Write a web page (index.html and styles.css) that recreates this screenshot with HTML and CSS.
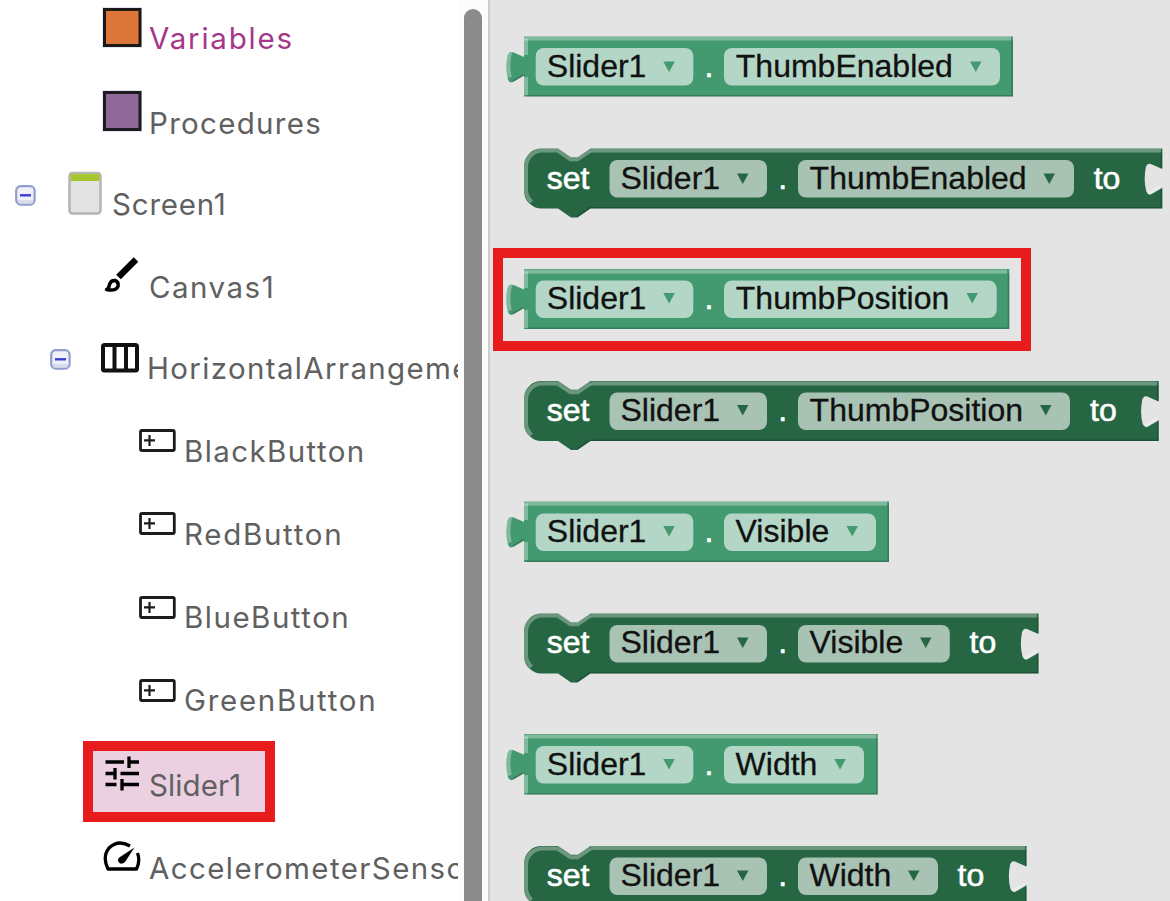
FILE: index.html
```html
<!DOCTYPE html>
<html lang="en">
<head>
<meta charset="utf-8">
<title>Blocks</title>
<link rel="stylesheet" href="styles.css">
</head>
<body>
<svg class="defs" width="0" height="0" aria-hidden="true">
  <defs>
    <symbol id="minus" viewBox="0 0 22 22">
      <rect x="1.2" y="1.2" width="18.4" height="18.4" rx="4.5" fill="#f0f1f8" stroke="#8f9dd0" stroke-width="2.2"/>
      <path d="M3 15h15v2q0 1.5-1.5 1.5h-12Q3 18.500 3 17z" fill="#d9dcea"/>
      <path d="M5 10.300h11" stroke="#3c3cd8" stroke-width="2.400"/>
    </symbol>
    <symbol id="button" viewBox="0 0 38 26">
      <rect x="1.500" y="1.500" width="33.800" height="20" rx="1.500" fill="#fff" stroke="#1c1c1c" stroke-width="2.800"/>
      <path d="M5 11.300h11M10.500 6v11" stroke="#1c1c1c" stroke-width="2.200"/>
    </symbol>
    <path id="arrow" d="M0 0h11.500L5.750 10.500z"/>
    <path id="setEdge" d="M531.500 54A18 18 0 0 1 526 43V19A16.500 16.500 0 0 1 542 2.500H557.500L570.500 11.200H577.500L590.500 2.500"/>
    <path id="getEdge" d="M526 59V41M526 19V2.500M512.500 16.500Q509.800 15.500 509.300 20Q507.300 31 509.800 41.500"/>
  </defs>
</svg>
<main class="app">
  <nav class="tree">
    <div class="row tall l1"><svg class="icon" viewBox="0 0 42 44"><rect x="1" y="2" width="40" height="41" fill="#e1e6f4"/><rect x="3.500" y="4.500" width="35.500" height="36" fill="#dc763b" stroke="#1d1916" stroke-width="3"/></svg><span class="label variables">Variables</span></div>
    <div class="row short l1"><svg class="icon" viewBox="0 0 42 44"><rect x="1" y="0" width="40" height="42" fill="#e1e6f4"/><rect x="3.500" y="2.500" width="35.500" height="37" fill="#8f6997" stroke="#1d1a20" stroke-width="3"/></svg><span class="label procedures">Procedures</span></div>
    <div class="row l0"><svg class="toggle"><use href="#minus"/></svg><svg class="icon" viewBox="0 0 42 44"><rect x="4.500" y="2" width="31" height="40.500" rx="3" fill="#e3e3e3" stroke="#b5b5b5" stroke-width="2.500"/><path d="M5.500 3h29v7H5.500z" fill="#a7c72f"/></svg><span class="label screen">Screen1</span></div>
    <div class="row short l1"><svg class="icon" viewBox="0 0 42 44"><path d="M17.500 23 35 5.500" stroke="#000" stroke-width="6.500"/><path d="M5.500 35.500Q8 34.500 8.500 30.500Q10 26 14 26.500Q18 28 17 32.500Q14.500 37.500 5.500 35.500z" fill="#fff" stroke="#000" stroke-width="3.500" stroke-linejoin="round"/></svg><span class="label canvas">Canvas1</span></div>
    <div class="row nested"><svg class="toggle"><use href="#minus"/></svg><svg class="icon" viewBox="0 0 42 44"><rect x="3" y="10" width="34" height="25.500" rx="1.500" fill="#fff" stroke="#111" stroke-width="4"/><path d="M14.500 10v26M26 10v26" stroke="#111" stroke-width="4"/></svg><span class="label horizontal">HorizontalArrangement1</span></div>
    <div class="row l2"><svg class="btn"><use href="#button"/></svg><span class="label black">BlackButton</span></div>
    <div class="row l2"><svg class="btn"><use href="#button"/></svg><span class="label red">RedButton</span></div>
    <div class="row l2"><svg class="btn low"><use href="#button"/></svg><span class="label blue">BlueButton</span></div>
    <div class="row tall l2"><svg class="btn low"><use href="#button"/></svg><span class="label green">GreenButton</span></div>
    <div class="row l1 selected"><svg class="icon" viewBox="0 0 42 44"><path d="M4.500 10h18.500M28 10h10M28 4.500v11.500M4.500 21.500h11M14 16v11.500M19.500 21.500H38M4.500 32.500h11M21 27v11.500M21 32.500h17" stroke="#000" stroke-width="3.300" fill="none"/></svg><span class="label slider">Slider1</span></div>
    <div class="row l1"><svg class="icon" viewBox="0 0 42 44"><path d="M29 11Q17 4 8 13Q1 22 7 34H35.500Q39.500 26 36.500 18" stroke="#000" stroke-width="3.300" fill="none" stroke-linejoin="round"/><path d="M33.500 12.500 24 27Q20 30.500 17.500 27Q16 24 19 22z"/></svg><span class="label accel">AccelerometerSensor1</span></div>
  </nav>
  <div class="scroll"><div class="thumb"></div></div>
  <section class="flyout">
    <svg class="block get" width="670" height="112" viewBox="500 0 670 112">
      <path class="body" d="M524 .500H1013V60.500H524V39.500l-11 6.500q-3.500 1.500-5-2.500q-3-11-.5-24q1.500-4.800 5-3.500l11.500 5z"/>
      <path class="shade" d="M1012.200 4V59.700H527M513 45 524 38.700"/><path class="light" d="M524 2.500H1011"/><use class="light" href="#getEdge"/>
      <rect class="field" x="535.700" y="12" width="157.600" height="37.500" rx="8"/><rect class="field" x="724" y="12" width="276" height="37.500" rx="8"/>
      <text x="546.800" y="41.400">Slider1</text><use class="caret" href="#arrow" x="663.300" y="25.500"/><text class="w" x="704.500" y="41.400">.</text><text x="735.800" y="41.400">ThumbEnabled</text><use class="caret" href="#arrow" x="970" y="25.500"/>
    </svg>
    <svg class="block set" width="670" height="121" viewBox="500 0 670 121">
      <path class="body" d="M524 18A17.500 17.500 0 0 1 541.500.500H558L571 9.200H577.500L590.500.500H1162.300V21l-11.500-5q-3.500-1.300-5 3.500q-2.500 13 .5 24q1.500 4 5 2.500l11-6.500V60.500H590.500L577.500 69.500H571L558 60.500H541.500A17.500 17.500 0 0 1 524 43z"/>
      <path class="shade" d="M1161.500 4V20M1161.500 41V59.700H590L577 68.700"/><path class="light" d="M590.500 2.500H1161M1149 45.500 1160.500 39"/><use class="light" href="#setEdge"/>
      <rect class="field" x="609.500" y="12" width="157.500" height="37.500" rx="8"/><rect class="field" x="798" y="12" width="276" height="37.500" rx="8"/>
      <text class="w" x="546.800" y="41">set</text><text x="620.500" y="41">Slider1</text><use class="caret" href="#arrow" x="737" y="25.500"/><text class="w" x="778.200" y="41">.</text><text x="809.600" y="41">ThumbEnabled</text><use class="caret" href="#arrow" x="1043.500" y="25.500"/><text class="w" x="1093.700" y="41">to</text>
    </svg>
    <svg class="block get" width="670" height="112" viewBox="500 0 670 112">
      <path class="body" d="M524 0H1009.300V60H524V39l-11 6.500q-3.500 1.500-5-2.500q-3-11-.5-24q1.500-4.800 5-3.500l11.500 5z"/>
      <path class="shade" d="M1008.500 4V59.200H527M513 44.500 524 38.200"/><path class="light" d="M524 2.500H1007"/><use class="light" href="#getEdge"/>
      <rect class="field" x="535.700" y="11.500" width="157.600" height="37.500" rx="8"/><rect class="field" x="724" y="11.500" width="272.700" height="37.500" rx="8"/>
      <text x="546.800" y="40">Slider1</text><use class="caret" href="#arrow" x="663.300" y="24"/><text class="w" x="704.500" y="40">.</text><text x="735.800" y="40">ThumbPosition</text><use class="caret" href="#arrow" x="966.500" y="24"/>
    </svg>
    <svg class="block set" width="670" height="120" viewBox="500 0 670 120">
      <path class="body" d="M524 17.500A17.500 17.500 0 0 1 541.500 0H558L571 8.700H577.500L590.500 0H1158.700V20.500l-11.500-5q-3.500-1.300-5 3.500q-2.500 13 .5 24q1.500 4 5 2.500l11-6.500V60H590.500L577.500 69H571L558 60H541.500A17.500 17.500 0 0 1 524 42.500z"/>
      <path class="shade" d="M1157.900 4V20M1157.900 40.500V59.200H590L577 68.200"/><path class="light" d="M590.500 2.500H1157M1145.400 45 1157 38.500"/><use class="light" href="#setEdge"/>
      <rect class="field" x="609.500" y="11.500" width="157.500" height="37.500" rx="8"/><rect class="field" x="798" y="11.500" width="272" height="37.500" rx="8"/>
      <text class="w" x="546.800" y="39.500">set</text><text x="620.500" y="39.500">Slider1</text><use class="caret" href="#arrow" x="737" y="24"/><text class="w" x="778.200" y="39.500">.</text><text x="809.600" y="39.500">ThumbPosition</text><use class="caret" href="#arrow" x="1040" y="24"/><text class="w" x="1090" y="39.500">to</text>
    </svg>
    <svg class="block get" width="670" height="112" viewBox="500 0 670 112">
      <path class="body" d="M524 .500H889V61H524V39.500l-11 6.500q-3.500 1.500-5-2.500q-3-11-.5-24q1.500-4.800 5-3.500l11.500 5z"/>
      <path class="shade" d="M888.200 4V60.200H527M513 45 524 38.700"/><path class="light" d="M524 2.500H887"/><use class="light" href="#getEdge"/>
      <rect class="field" x="535.700" y="12.500" width="157.600" height="37.500" rx="8"/><rect class="field" x="724" y="12.500" width="152" height="37.500" rx="8"/>
      <text x="546.800" y="41">Slider1</text><use class="caret" href="#arrow" x="663.300" y="25"/><text class="w" x="704.500" y="41">.</text><text x="735.600" y="41">Visible</text><use class="caret" href="#arrow" x="846.500" y="25"/>
    </svg>
    <svg class="block set" width="670" height="121" viewBox="500 0 670 121">
      <path class="body" d="M524 18A17.500 17.500 0 0 1 541.500.500H558L571 9.200H577.500L590.500.500H1038.500V21l-11.500-5q-3.500-1.300-5 3.500q-2.500 13 .5 24q1.500 4 5 2.500l11-6.500V60.500H590.500L577.500 69.500H571L558 60.500H541.500A17.500 17.500 0 0 1 524 43z"/>
      <path class="shade" d="M1037.700 4V20M1037.700 41V59.700H590L577 68.700"/><path class="light" d="M590.500 2.500H1037M1025.200 45.500 1036.700 39"/><use class="light" href="#setEdge"/>
      <rect class="field" x="609.500" y="12" width="157.500" height="37.500" rx="8"/><rect class="field" x="798" y="12" width="151.800" height="37.500" rx="8"/>
      <text class="w" x="546.800" y="40.300">set</text><text x="620.500" y="40.300">Slider1</text><use class="caret" href="#arrow" x="737" y="24.500"/><text class="w" x="778.200" y="40.300">.</text><text x="809.500" y="40.300">Visible</text><use class="caret" href="#arrow" x="920" y="24.500"/><text class="w" x="969.500" y="40.300">to</text>
    </svg>
    <svg class="block get" width="670" height="112" viewBox="500 0 670 112">
      <path class="body" d="M524 0H877.700V60.500H524V39.300l-11 6.500q-3.500 1.500-5-2.500q-3-11-.5-24q1.500-4.800 5-3.500l11.500 5z"/>
      <path class="shade" d="M876.900 4V59.700H527M513 44.800 524 38.500"/><path class="light" d="M524 2.500H876"/><use class="light" href="#getEdge"/>
      <rect class="field" x="535.700" y="12" width="157.600" height="37.500" rx="8"/><rect class="field" x="724" y="12" width="140" height="37.500" rx="8"/>
      <text x="546.800" y="40.700">Slider1</text><use class="caret" href="#arrow" x="663.300" y="25"/><text class="w" x="704.500" y="40.700">.</text><text x="735.600" y="40.700">Width</text><use class="caret" href="#arrow" x="834.300" y="25"/>
    </svg>
    <svg class="block set" width="670" height="55" viewBox="500 0 670 55">
      <path class="body" d="M524 17.500A17.500 17.500 0 0 1 541.500 0H558L571 8.700H577.500L590.500 0H1026.500V20.500l-11.500-5q-3.500-1.300-5 3.500q-2.500 13 .5 24q1.500 4 5 2.500l11-6.500V60H541.500A17.500 17.500 0 0 1 524 42.500z"/>
      <path class="shade" d="M1025.700 4V20M1025.700 40.500V59"/><path class="light" d="M590.500 2H1025M1013.200 45 1024.700 38.500"/><use class="light" href="#setEdge"/>
      <rect class="field" x="609.500" y="11.500" width="157.500" height="37.500" rx="8"/><rect class="field" x="798" y="11.500" width="140" height="37.500" rx="8"/>
      <text class="w" x="546.800" y="40.300">set</text><text x="620.500" y="40.300">Slider1</text><use class="caret" href="#arrow" x="737" y="24.500"/><text class="w" x="778.200" y="40.300">.</text><text x="809.500" y="40.300">Width</text><use class="caret" href="#arrow" x="908" y="24.500"/><text class="w" x="957.500" y="40.300">to</text>
    </svg>
  </section>
  <div class="frame frame-slider"></div>
  <div class="frame frame-block"></div>
</main>
</body>
</html>
```
FILE: styles.css
```css
body { margin: 0; background: #fff; }
.defs { position: absolute; }
.app { position: relative; z-index: 0; display: flex; width: 1170px; height: 901px; overflow: hidden; }

.tree { width: 458px; flex: none; box-sizing: border-box; padding-top: 5px; overflow: hidden; font-family: Inter, "Open Sans", sans-serif; font-size: 29.5px; color: #606060; }
.row { display: flex; align-items: flex-start; height: 83px; white-space: nowrap; }
.row.tall { height: 85px; }
.row.short { height: 81px; }
.l0 { padding-left: 15px; }
.l1 { padding-left: 101px; }
.l2 { padding-left: 139px; }
.nested { padding-left: 50px; }
.icon { width: 42px; height: 44px; flex: none; }
.toggle { width: 22px; height: 22px; flex: none; margin-top: 14px; }
.l0 .icon { margin-left: 28px; }
.nested .icon { margin-left: 28px; }
.btn { width: 38px; height: 26px; flex: none; margin-top: 11px; }
.btn.low { margin-top: 12px; }
.label { line-height: 36px; padding-top: 15px; margin-left: 6px; }
.l0 .label, .nested .label { margin-left: 5px; }
.l2 .label { margin-left: 7px; }
.variables { color: #a5378a; letter-spacing: 1.8px; }
.procedures { letter-spacing: 1.3px; }
.screen { letter-spacing: .8px; }
.canvas { letter-spacing: 1.5px; }
.horizontal { letter-spacing: 1.35px; }
.black { letter-spacing: 1.4px; }
.red { letter-spacing: 1.7px; }
.blue { letter-spacing: 1.5px; }
.green { letter-spacing: 1.7px; }
.slider { letter-spacing: .1px; }
.accel { letter-spacing: 1.4px; }

.scroll { width: 30px; flex: none; box-sizing: border-box; padding: 9px 6px 0; background: #fcfcfc; }
.thumb { height: 892px; border-radius: 9px 9px 0 0; background: #8b8b8b; }

.flyout { flex: 1; box-sizing: border-box; height: 901px; padding: 36px 0 0 10px; border-left: 2px solid #cdcdcd; background: #e4e4e4; overflow: hidden; }
.block { display: block; font-family: "Liberation Sans", Arial, sans-serif; font-size: 32px; }
.block text { fill: #111; stroke: #111; stroke-width: .3; }
.block text.w { fill: #fff; stroke: #fff; stroke-width: .6; }
.light { fill: none; stroke: #fff; stroke-opacity: .32; stroke-width: 4; }
.shade { fill: none; stroke: #000; stroke-opacity: .2; stroke-width: 1.6; }
.get .body, .get .caret { fill: #439970; }
.set .body, .set .caret { fill: #266643; }
.field { fill: #fff; fill-opacity: .6; }

.frame { position: absolute; box-sizing: border-box; border: 10px solid #e81c1c; }
.frame-slider { left: 83px; top: 741px; width: 191.500px; height: 80.500px; background: #ead0e1; z-index: -1; }
.frame-block { left: 492.500px; top: 248px; width: 538.500px; height: 103px; }
```
